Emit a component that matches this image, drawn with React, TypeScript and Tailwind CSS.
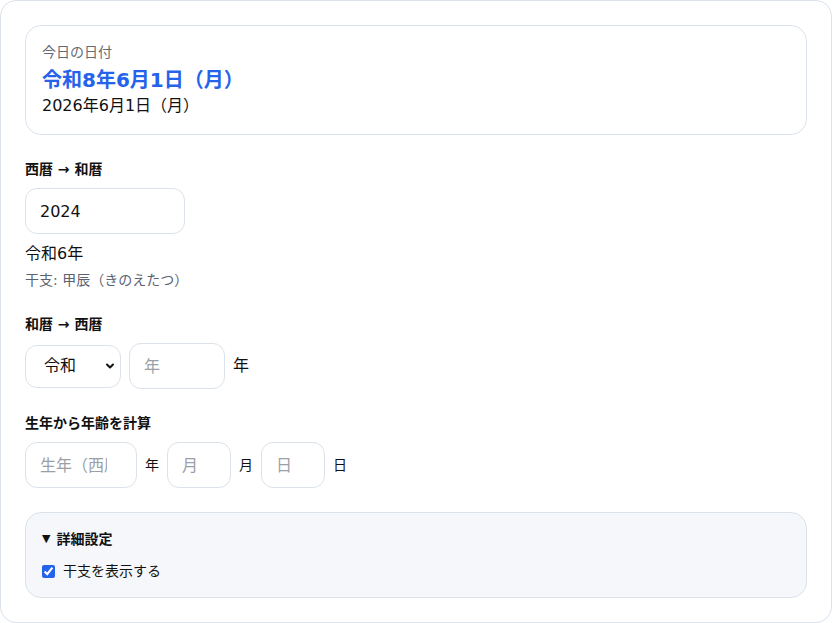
import React from "react";

const font = { fontFamily: '"DejaVu Sans", "Noto Sans CJK JP", sans-serif' };

export default function App() {
  return (
    <div className="w-[832px] h-[623px] bg-white" style={font}>
      <div className="w-[832px] h-[623px] border border-[#dbe2ea] rounded-2xl bg-white p-6 flex flex-col">
        <div className="border border-[#dbe2ea] rounded-2xl px-4 pt-4 pb-4 flex flex-col">
          <div className="text-[14px] leading-5 text-[#666b73]">今日の日付</div>
          <div className="mt-1 text-[20px] leading-7 font-bold text-[#2563eb]">令和8年6月1日（月）</div>
          <div className="text-[16px] leading-6 text-[#111]">2026年6月1日（月）</div>
        </div>

        <div className="mt-6 flex flex-col">
          <div className="text-[14px] leading-5 font-bold text-[#111]">西暦 → 和暦</div>
          <input
            type="number"
            defaultValue="2024"
            className="mt-[9px] w-[160px] h-[46px] border border-[#dbe2ea] rounded-xl px-[14px] text-[16px] text-[#111] outline-none"
          />
          <div className="mt-2 text-[16px] leading-6 text-[#111]">令和6年</div>
          <div className="mt-1 text-[14px] leading-5 text-[#5b6270]">干支: 甲辰（きのえたつ）</div>
        </div>

        <div className="mt-6 flex flex-col">
          <div className="text-[14px] leading-5 font-bold text-[#111]">和暦 → 西暦</div>
          <div className="mt-[9px] flex items-center gap-2">
            <div className="relative w-[96px] h-[43px]">
              <select className="appearance-none w-full h-full border border-[#dbe2ea] rounded-xl pl-[18px] text-[16px] text-[#111] bg-white outline-none">
                <option>令和</option>
              </select>
              <svg className="absolute right-[6px] top-1/2 -translate-y-1/2 pointer-events-none" width="10" height="10" viewBox="0 0 10 10">
                <path d="M2 3.5 L5 6.5 L8 3.5" fill="none" stroke="#111" strokeWidth="2" strokeLinecap="round" strokeLinejoin="round" />
              </svg>
            </div>
            <input
              type="number"
              placeholder="年"
              className="w-[96px] h-[46px] border border-[#dbe2ea] rounded-xl px-[14px] text-[16px] text-[#111] placeholder:text-[#9aa0a8] outline-none"
            />
            <span className="text-[16px] text-[#111]">年</span>
          </div>
        </div>

        <div className="mt-6 flex flex-col">
          <div className="text-[14px] leading-5 font-bold text-[#111]">生年から年齢を計算</div>
          <div className="mt-[9px] flex items-center gap-2">
            <input
              type="number"
              placeholder="生年（西暦）"
              className="w-[112px] h-[46px] border border-[#dbe2ea] rounded-xl px-[14px] text-[16px] text-[#111] placeholder:text-[#9aa0a8] outline-none"
            />
            <span className="text-[14px] text-[#111]">年</span>
            <input
              type="number"
              placeholder="月"
              className="w-[64px] h-[46px] border border-[#dbe2ea] rounded-xl px-[14px] text-[16px] text-[#111] placeholder:text-[#9aa0a8] outline-none"
            />
            <span className="text-[14px] text-[#111]">月</span>
            <input
              type="number"
              placeholder="日"
              className="w-[64px] h-[46px] border border-[#dbe2ea] rounded-xl px-[14px] text-[16px] text-[#111] placeholder:text-[#9aa0a8] outline-none"
            />
            <span className="text-[14px] text-[#111]">日</span>
          </div>
        </div>

        <div className="mt-6 border border-[#dbe2ea] rounded-2xl bg-[#f5f7fb] px-4 py-4 flex flex-col">
          <div className="text-[14px] leading-5 font-bold text-[#111] flex items-center">
            <span className="text-[11px] mr-1.5">▼</span>
            <span>詳細設定</span>
          </div>
          <label className="mt-3 flex items-center text-[14px] leading-5 text-[#111]">
            <input type="checkbox" defaultChecked className="w-[13px] h-[13px] accent-[#2563eb] mr-2" />
            干支を表示する
          </label>
        </div>
      </div>
    </div>
  );
}
